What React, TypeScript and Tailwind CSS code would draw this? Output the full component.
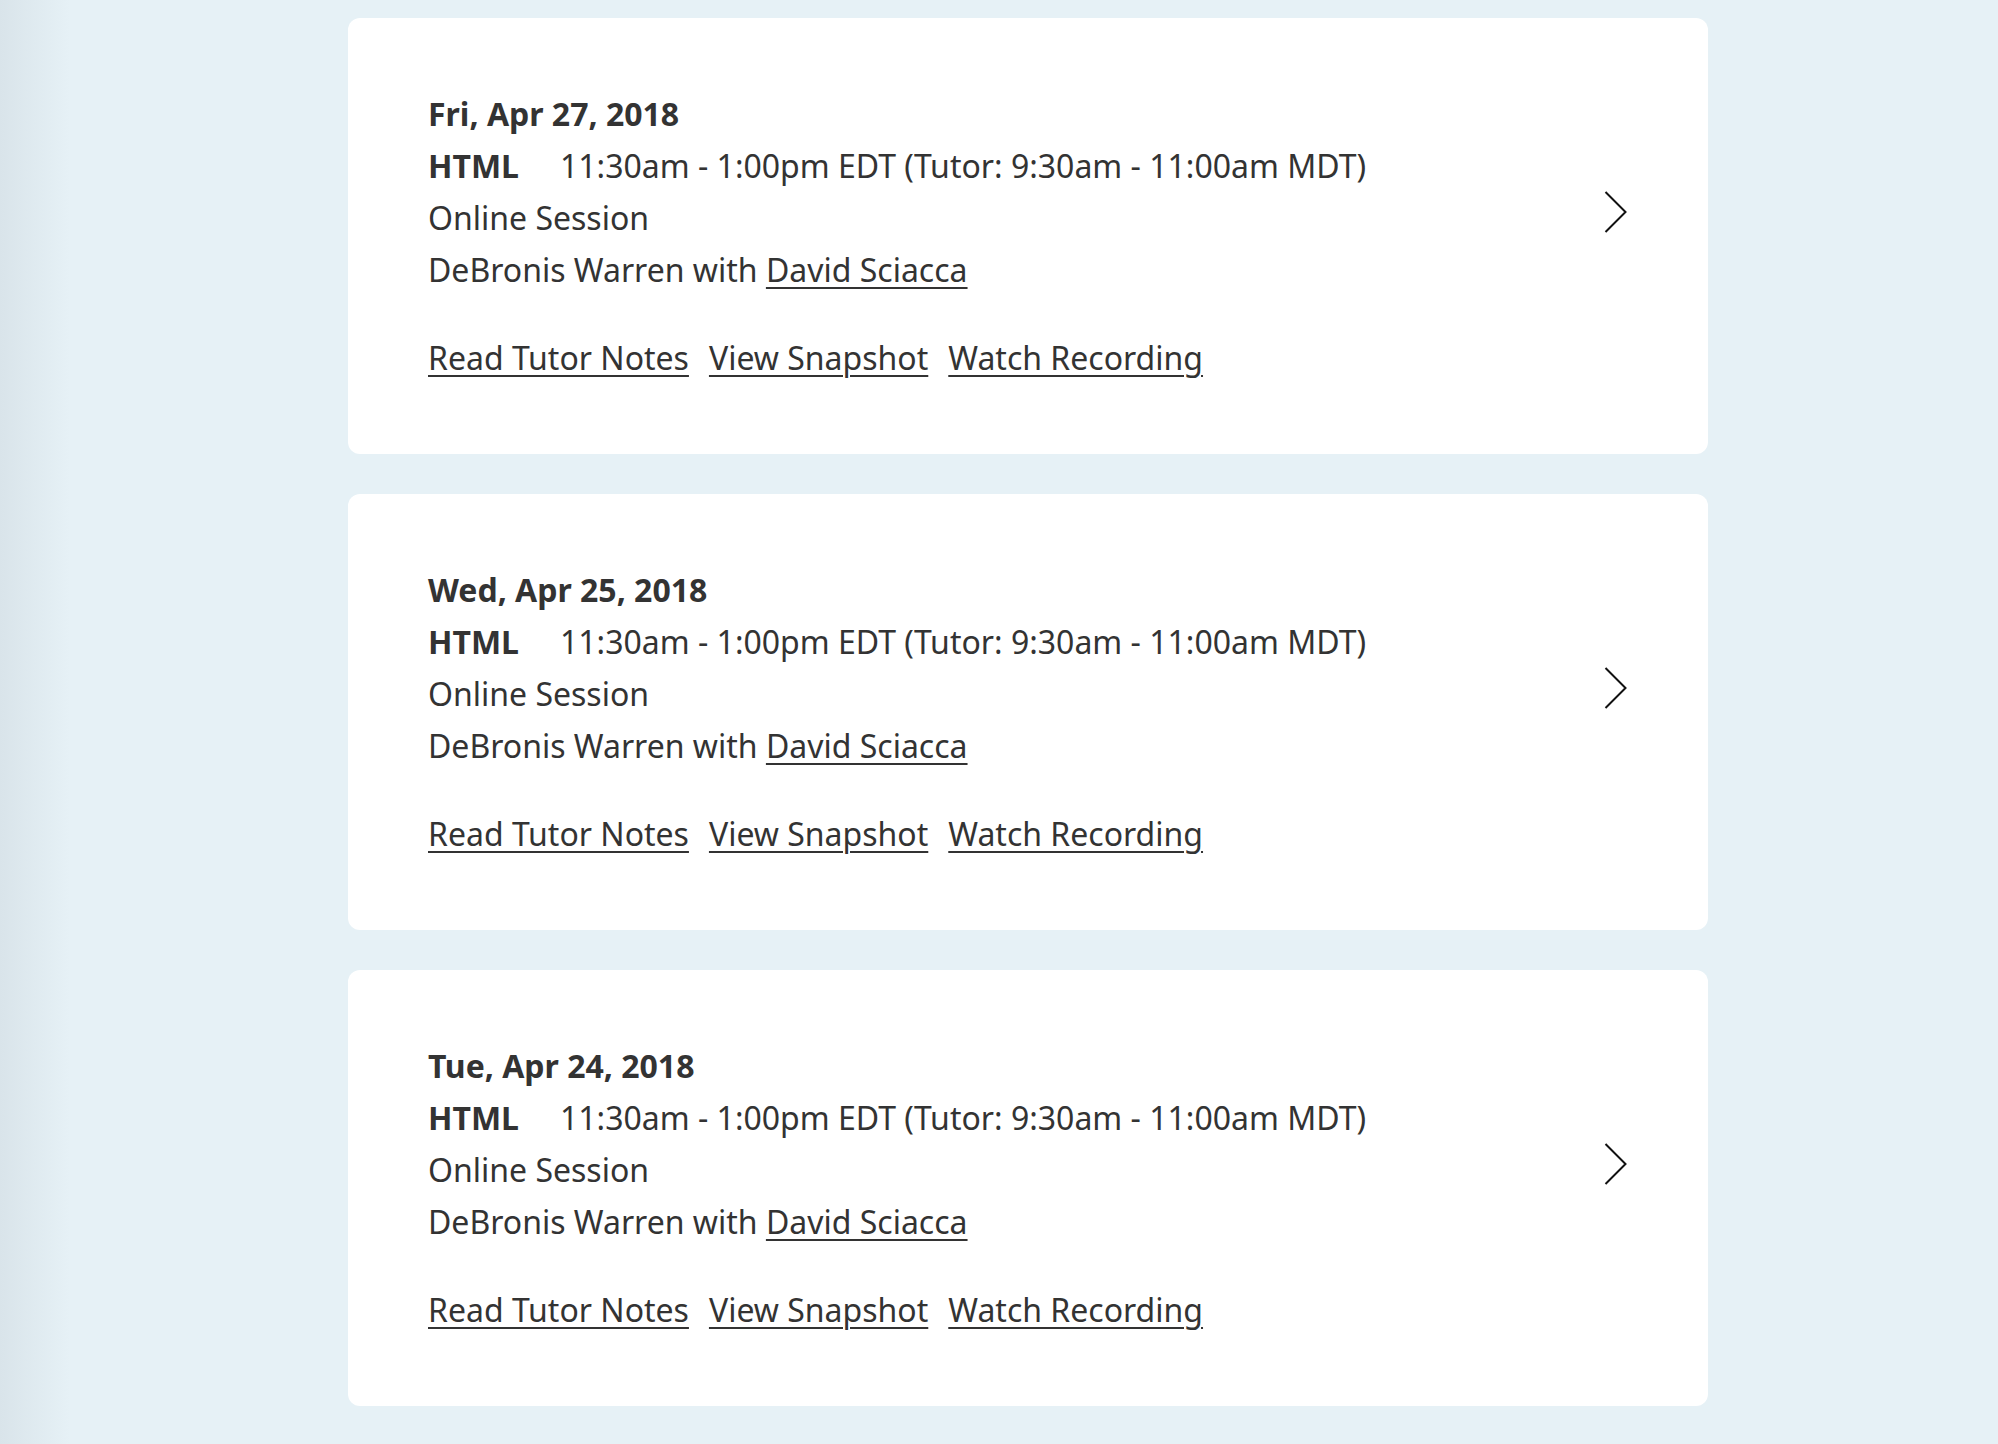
const sessions = [
  { date: "Fri, Apr 27, 2018" },
  { date: "Wed, Apr 25, 2018" },
  { date: "Tue, Apr 24, 2018" },
];

function Chevron() {
  return (
    <svg width="24" height="42" viewBox="0 0 24 42" fill="none" className="block">
      <path d="M1.5 1 L21.5 21 L1.5 41" stroke="#111" strokeWidth="2" />
    </svg>
  );
}

function SessionCard({ date }: { date: string }) {
  return (
    <div className="flex h-[436px] items-start rounded-xl bg-white pl-[80px] pr-[80px] pt-[70px]">
      <div className="flex-1 text-[32px] leading-[52px] text-[#333]">
        <div className="font-bold">{date}</div>
        <div>
          <span className="inline-block w-[132px] font-bold">HTML</span>
          11:30am - 1:00pm EDT (Tutor: 9:30am - 11:00am MDT)
        </div>
        <div>Online Session</div>
        <div>
          DeBronis Warren with{" "}
          <a href="#" className="underline decoration-2 underline-offset-[5px]">
            David Sciacca
          </a>
        </div>
        <div className="mt-[36px] flex gap-[20px]">
          <a href="#" className="underline decoration-2 underline-offset-[5px]">
            Read Tutor Notes
          </a>
          <a href="#" className="underline decoration-2 underline-offset-[5px]">
            View Snapshot
          </a>
          <a href="#" className="underline decoration-2 underline-offset-[5px]">
            Watch Recording
          </a>
        </div>
      </div>
      <div className="mt-[103px]">
        <Chevron />
      </div>
    </div>
  );
}

export default function App() {
  return (
    <div
      className="min-h-[1444px] bg-[linear-gradient(to_right,#d9e4ea_0px,#e6f1f6_70px,#e6f1f6_100%)] pt-[18px]"
      style={{ fontFamily: '"Noto Sans", "Open Sans", sans-serif' }}
    >
      <div className="ml-[348px] flex w-[1360px] flex-col gap-[40px]">
        {sessions.map((s) => (
          <SessionCard key={s.date} date={s.date} />
        ))}
      </div>
    </div>
  );
}
